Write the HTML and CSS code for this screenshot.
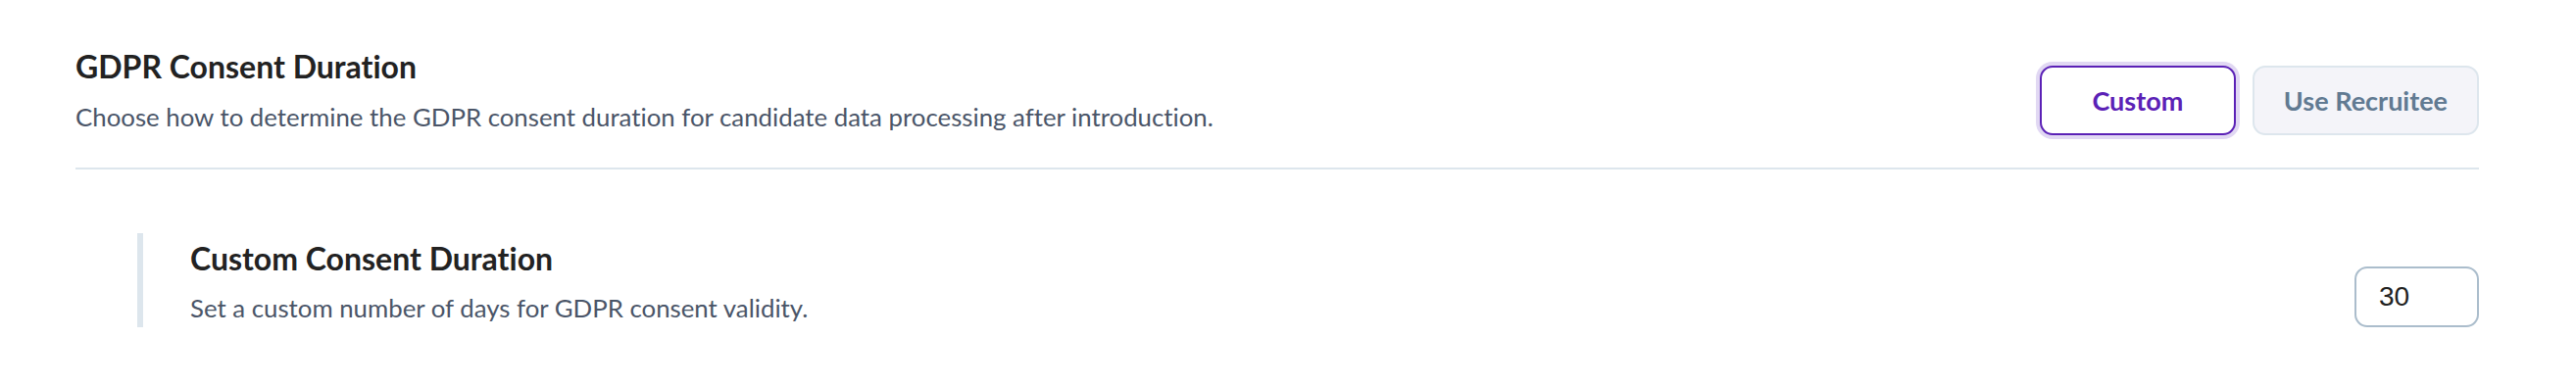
FILE: index.html
```html
<!DOCTYPE html>
<html lang="en">
<head>
<meta charset="utf-8">
<title>GDPR Consent Duration</title>
<link rel="stylesheet" href="styles.css">
</head>
<body>
<div class="page">
  <div class="section-head">
    <div class="head-text">
      <h2 class="title">GDPR Consent Duration</h2>
      <p class="desc">Choose how to determine the GDPR consent duration for candidate data processing after introduction.</p>
    </div>
    <div class="toggle">
      <button class="btn btn-active" type="button">Custom</button>
      <button class="btn btn-muted" type="button">Use Recruitee</button>
    </div>
  </div>
  <div class="sub">
    <div class="sub-text">
      <h3 class="title">Custom Consent Duration</h3>
      <p class="desc">Set a custom number of days for GDPR consent validity.</p>
    </div>
    <input class="days" type="text" value="30">
  </div>
</div>
</body>
</html>
```

FILE: styles.css
```css
html, body {
  margin: 0;
  padding: 0;
  background: #ffffff;
}
body {
  font-family: "Lato", "Liberation Sans", sans-serif;
  font-variant-ligatures: none;
}
.page {
  padding: 48px 99px 0 77px;
}
.section-head {
  display: flex;
  justify-content: space-between;
  align-items: flex-end;
  padding-bottom: 34px;
  border-bottom: 2px solid #dde6ed;
}
.title {
  margin: 0;
  font-size: 32px;
  line-height: 40px;
  font-weight: 700;
  color: #222222;
}
.desc {
  margin: 13px 0 0;
  font-size: 25.8px;
  line-height: 36px;
  font-weight: 400;
  color: #4a5568;
}
.toggle {
  display: flex;
  gap: 17px;
  margin-bottom: -1px;
}
.btn {
  box-sizing: border-box;
  height: 71px;
  min-width: 200px;
  padding: 0 30px;
  border-radius: 13px;
  font-family: "Lato", "Liberation Sans", sans-serif;
  font-variant-ligatures: none;
  font-size: 27px;
  font-weight: 700;
  cursor: pointer;
}
.btn-active {
  background: #ffffff;
  border: 2px solid #5b21b6;
  color: #5b21b6;
  box-shadow: 0 0 0 4px #e1d8f3;
}
.btn-muted {
  background: #f4f4f9;
  border: 2px solid #dde6ed;
  color: #617a92;
}
.sub {
  display: flex;
  justify-content: space-between;
  align-items: flex-end;
  margin: 65px 0 0 63px;
}
.sub-text {
  border-left: 6px solid #dde6ed;
  padding: 6px 0 2px 48px;
}
.sub-text .desc {
  margin-top: 12px;
}
.days {
  box-sizing: border-box;
  width: 127px;
  height: 62px;
  margin-bottom: 0;
  padding: 0 0 0 23px;
  border: 2px solid #abbdcc;
  border-radius: 13px;
  font-family: "Liberation Sans", Arial, sans-serif;
  font-size: 28px;
  color: #222222;
  background: #ffffff;
  outline: none;
}
```
